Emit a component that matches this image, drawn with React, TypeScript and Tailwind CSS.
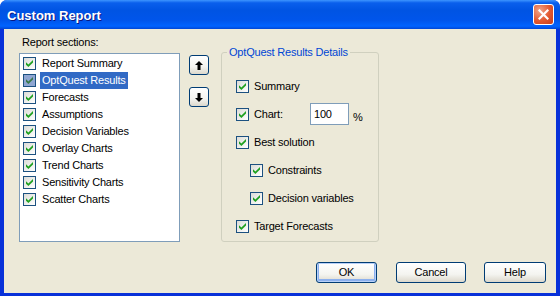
import type { ReactNode } from 'react'

const sections = [
  'Report Summary',
  'OptQuest Results',
  'Forecasts',
  'Assumptions',
  'Decision Variables',
  'Overlay Charts',
  'Trend Charts',
  'Sensitivity Charts',
  'Scatter Charts',
]

function CheckBox({ selected = false }: { selected?: boolean }) {
  return (
    <span
      className={
        selected
          ? 'w-[13px] h-[13px] shrink-0 border border-[#1c5180] bg-[#8fa6d2] flex items-center justify-center'
          : 'w-[13px] h-[13px] shrink-0 border border-[#1c5180] bg-[linear-gradient(135deg,#dcdcd7,#ffffff)] flex items-center justify-center'
      }
    >
      <svg width="7" height="7" viewBox="0 0 7 7">
        <polygon points="0,2.3 2.4,4.6 7,0 7,2.4 2.4,7 0,4.7" fill={selected ? '#3a7a4a' : '#21a121'} />
      </svg>
    </span>
  )
}

function XpButton({ children, className = '', isDefault = false }: { children: ReactNode; className?: string; isDefault?: boolean }) {
  return (
    <button
      className={`h-[21px] rounded-[3px] border border-[#003c74] bg-[linear-gradient(180deg,#ffffff_0%,#f4f4f0_60%,#dcd8cc_100%)] flex items-center justify-center text-black ${
        isDefault ? 'shadow-[inset_0_0_0_1px_#b8d0f8,inset_0_-1px_0_2px_#8cb0ee]' : ''
      } ${className}`}
    >
      {children}
    </button>
  )
}

function ArrowButton({ down = false }: { down?: boolean }) {
  return (
    <XpButton className="w-[20px] !h-[20px]">
      <svg width="8" height="9" viewBox="0 0 8 9" className={down ? 'rotate-180' : ''}>
        <polygon points="4,0 8,4 5.5,4 5.5,9 2.5,9 2.5,4 0,4" fill="#000" />
      </svg>
    </XpButton>
  )
}

function OptionRow({ label, indent = false, children }: { label: string; indent?: boolean; children?: ReactNode }) {
  return (
    <div className={`h-[28px] flex items-center ${indent ? 'pl-[14px]' : ''}`}>
      <CheckBox />
      <span className={`ml-[5px] ${children ? 'w-[56px]' : ''}`}>{label}</span>
      {children}
    </div>
  )
}

export default function App() {
  return (
    <div className="w-[560px] h-[296px] bg-white font-['Liberation_Sans',Arial,sans-serif] text-[11px] leading-[13px] tracking-[-0.2px] text-black">
      <div className="w-[560px] h-[296px] flex flex-col rounded-t-[7px] overflow-hidden bg-[#0831d9]">
        {/* title bar */}
        <div className="h-[29px] shrink-0 flex items-center justify-between pl-[7px] pr-[7px] bg-[linear-gradient(180deg,#3d95ff_0%,#0a5fec_10%,#0054e3_35%,#0055eb_70%,#0063ff_90%,#0046d5_100%)]">
          <span className="pt-[2px] text-white text-[13px] font-bold tracking-normal [text-shadow:1px_1px_0_#0a1883]">Custom Report</span>
          <button className="w-[21px] h-[21px] mt-[-1px] mr-[-1px] rounded-[3px] border border-white bg-[radial-gradient(circle_at_30%_30%,#f0a58a_0%,#e2582f_55%,#c43d1c_100%)] flex items-center justify-center">
            <svg width="11" height="11" viewBox="0 0 11 11">
              <path d="M1.5 1.5 L9.5 9.5 M9.5 1.5 L1.5 9.5" stroke="#fff" strokeWidth="2.2" strokeLinecap="square" />
            </svg>
          </button>
        </div>

        {/* client area */}
        <div className="flex-1 mx-[4px] mb-[3px] bg-[#ece9d8] flex flex-col">
          <div className="flex pt-[7px] pl-[15px]">
            {/* sections list */}
            <div className="flex flex-col">
              <div className="pl-[3px] h-[13px]">Report sections:</div>
              <div className="mt-[4px] w-[161px] h-[189px] border border-[#7f9db9] bg-white pt-[1px]">
                {sections.map((s, i) => (
                  <div key={s} className="h-[17px] flex items-center pl-[3px]">
                    <CheckBox selected={i === 1} />
                    <span
                      className={
                        i === 1
                          ? 'ml-[4px] px-[2px] h-[17px] flex items-center bg-[#316ac5] text-white'
                          : 'ml-[4px] px-[2px]'
                      }
                    >
                      {s}
                    </span>
                  </div>
                ))}
              </div>
            </div>

            {/* move buttons */}
            <div className="ml-[9px] mt-[19px] flex flex-col gap-[12px]">
              <ArrowButton />
              <ArrowButton down />
            </div>

            {/* details group */}
            <fieldset className="ml-[12px] mt-[10px] w-[158px] h-[196px] border border-[#d0d0bf] rounded-[3px] pl-[14px]">
              <legend className="ml-[-9px] px-[2px] text-[#0046d5]">OptQuest Results Details</legend>
              <div className="pt-[13px] flex flex-col">
                <OptionRow label="Summary" />
                <OptionRow label="Chart:">
                  <input
                    readOnly
                    value="100"
                    className="w-[39px] h-[22px] border border-[#7f9db9] bg-white px-[3px] text-[11px] outline-none"
                  />
                  <span className="ml-[4px] mt-[7px]">%</span>
                </OptionRow>
                <OptionRow label="Best solution" />
                <OptionRow label="Constraints" indent />
                <OptionRow label="Decision variables" indent />
                <OptionRow label="Target Forecasts" />
              </div>
            </fieldset>
          </div>

          {/* dialog buttons */}
          <div className="mt-[20px] pr-[10px] flex justify-end">
            <XpButton isDefault className="w-[61px]">OK</XpButton>
            <XpButton className="w-[70px] ml-[19px]">Cancel</XpButton>
            <XpButton className="w-[62px] ml-[18px]">Help</XpButton>
          </div>
        </div>
      </div>
    </div>
  )
}
